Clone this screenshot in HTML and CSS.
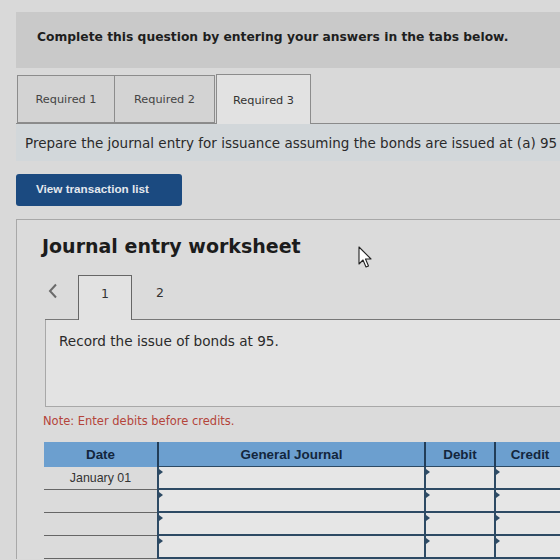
FILE: index.html
```html
<!DOCTYPE html>
<html>
<head>
<meta charset="utf-8">
<link rel="stylesheet" href="styles.css">
</head>
<body>
<div class="page">
  <div class="banner">Complete this question by entering your answers in the tabs below.</div>
  <div class="tabs">
    <div class="tab t1">Required 1</div>
    <div class="tab t2">Required 2</div>
    <div class="tab active">Required 3</div>
  </div>
  <div class="band">Prepare the journal entry for issuance assuming the bonds are issued at (a) 95</div>
  <button class="btn">View transaction list</button>
  <div class="worksheet">
    <h2 class="ws-title">Journal entry worksheet</h2>
    <div class="nav">
      <span class="prev"><svg width="10" height="16" viewBox="0 0 10 16"><polyline points="8,1.5 2,8 8,14.5" fill="none" stroke="#6a6a6a" stroke-width="2"/></svg></span>
      <span class="num current">1</span>
      <span class="num">2</span>
    </div>
    <div class="desc">Record the issue of bonds at 95.</div>
    <div class="note">Note: Enter debits before credits.</div>
    <table class="journal">
      <thead>
        <tr><th class="c-date">Date</th><th class="c-gj">General Journal</th><th class="c-num">Debit</th><th class="c-num">Credit</th></tr>
      </thead>
      <tbody>
        <tr><td class="date">January 01</td><td class="in"><i></i></td><td class="in"><i></i></td><td class="in"><i></i></td></tr>
        <tr><td class="date"></td><td class="in"><i></i></td><td class="in"><i></i></td><td class="in"><i></i></td></tr>
        <tr><td class="date"></td><td class="in"><i></i></td><td class="in"><i></i></td><td class="in"><i></i></td></tr>
        <tr><td class="date"></td><td class="in"><i></i></td><td class="in"><i></i></td><td class="in"><i></i></td></tr>
      </tbody>
    </table>
  </div>
</div>
<svg class="cursor" width="14" height="23" viewBox="0 0 14 23"><path d="M1 1 L1 18 L5 14 L8 21 L10.5 20 L7.5 13 L13 13 Z" fill="#fff" stroke="#222" stroke-width="1.1" stroke-linejoin="round"/></svg>
</body>
</html>
```
FILE: styles.css
```css
html, body {
  margin: 0;
  width: 560px;
  height: 560px;
  overflow: hidden;
  background: #d9d9d9;
  font-family: "DejaVu Sans", Verdana, sans-serif;
  color: #222;
}
.page {
  padding: 12px 0 0 16px;
  width: 620px;
}
.banner {
  height: 56px;
  background: #c9c9c9;
  display: flex;
  align-items: center;
  padding-left: 21px;
  padding-bottom: 6px;
  box-sizing: border-box;
  font-weight: bold;
  font-size: 12.3px;
  color: #1e1e1e;
}
.tabs {
  margin-top: 6px;
  display: flex;
  align-items: flex-end;
  height: 49px;
  border-bottom: 1px solid #8a8a8a;
}
.tab {
  box-sizing: border-box;
  height: 48px;
  border: 1px solid #8c8c8c;
  background: #d3d3d3;
  display: flex;
  align-items: center;
  justify-content: center;
  font-size: 11.3px;
  color: #444;
}
.t1 { width: 98px; margin-left: 1px; }
.t2 { width: 101px; margin-left: -1px; }
.tab.active {
  width: 95px;
  height: 50px;
  margin-left: 1px;
  margin-bottom: -1px;
  border-bottom: none;
  background: #e2e2e2;
  color: #333;
  padding-top: 2px;
}
.band {
  height: 37px;
  background: #d2d7da;
  padding-left: 9px;
  display: flex;
  align-items: center;
  white-space: nowrap;
  font-size: 13.5px;
  color: #2a2a2a;
}
.btn {
  display: block;
  margin-top: 13px;
  width: 166px;
  height: 32px;
  border: none;
  border-radius: 3px;
  background: #1b4a80;
  color: #e4e8ee;
  font-family: "Liberation Sans", Arial, sans-serif;
  font-weight: bold;
  font-size: 11.7px;
  text-align: left;
  padding: 0 0 3px 20px;
}
.worksheet {
  margin-top: 13px;
  border-top: 1px solid #a8a8a8;
  border-left: 1px solid #a8a8a8;
  background: #dbdbdb;
  padding: 14px 0 0 28px;
}
.ws-title {
  margin: 0 0 0 -3px;
  font-size: 19px;
  line-height: 24px;
  font-weight: bold;
  color: #1c1c1c;
}
.nav {
  margin-top: 17px;
  display: flex;
  align-items: stretch;
  height: 44px;
  border-bottom: 1px solid #777;
}
.prev {
  width: 33px;
  display: flex;
  align-items: flex-start;
  padding: 8px 0 0 3px;
  box-sizing: border-box;
}
.num {
  width: 56px;
  display: flex;
  align-items: center;
  justify-content: center;
  font-size: 12.5px;
  color: #333;
  box-sizing: border-box;
  padding-bottom: 10px;
}
.num.current {
  width: 54px;
  border: 1px solid #666;
  border-bottom: none;
  background: #e2e2e2;
  margin-bottom: -1px;
  padding-bottom: 10px;
}
.desc {
  height: 87px;
  box-sizing: border-box;
  background: #e3e3e3;
  border-left: 1px solid #a8a8a8;
  border-bottom: 1px solid #a8a8a8;
  padding: 13px 0 0 13px;
  font-size: 13.6px;
  color: #2a2a2a;
}
.note {
  margin-top: 7px;
  margin-left: -2px;
  font-size: 11.5px;
  line-height: 15px;
  color: #b4443a;
}
.journal {
  margin-top: 13px;
  margin-left: -1px;
  border-collapse: collapse;
  font-family: "Liberation Sans", Arial, sans-serif;
  font-size: 12.4px;
}
.journal th {
  height: 24px;
  padding: 0;
  background: #6c9fcf;
  color: #13263d;
  font-weight: bold;
  font-size: 13.4px;
  border-left: 2px solid #223d58;
}
.journal th.c-date { border-left: none; }
.c-date { width: 113px; }
.c-gj { width: 265px; }
.c-num { width: 68px; }
.journal td {
  height: 21px;
  padding: 0;
}
.journal td.date {
  text-align: center;
  color: #333;
  border-bottom: 1px solid #666;
}
.journal td.in {
  border: 2px solid #2d4a64;
  border-top-width: 1px;
  background: #e6e6e6;
  position: relative;
}
.journal td.in i {
  position: absolute;
  left: 0;
  top: 2px;
  width: 0;
  height: 0;
  border-top: 3px solid transparent;
  border-bottom: 3px solid transparent;
  border-left: 4px solid #2d4a64;
}
.cursor {
  position: absolute;
  left: 358px;
  top: 246px;
}
```
